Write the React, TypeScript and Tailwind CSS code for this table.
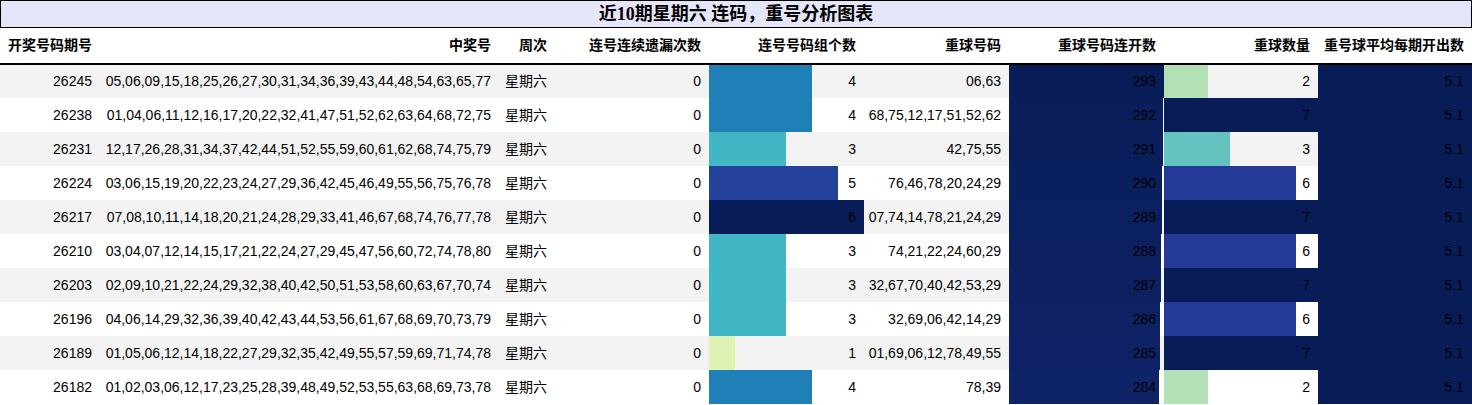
import React from "react";

type Row = {
  issue: string;
  nums: string;
  week: string;
  miss: number;
  groups: number;
  repeat: string;
  streak: number;
  repeatCount: number;
  avg: string;
};

const rows: Row[] = [
  { issue: "26245", nums: "05,06,09,15,18,25,26,27,30,31,34,36,39,43,44,48,54,63,65,77", week: "星期六", miss: 0, groups: 4, repeat: "06,63", streak: 293, repeatCount: 2, avg: "5.1" },
  { issue: "26238", nums: "01,04,06,11,12,16,17,20,22,32,41,47,51,52,62,63,64,68,72,75", week: "星期六", miss: 0, groups: 4, repeat: "68,75,12,17,51,52,62", streak: 292, repeatCount: 7, avg: "5.1" },
  { issue: "26231", nums: "12,17,26,28,31,34,37,42,44,51,52,55,59,60,61,62,68,74,75,79", week: "星期六", miss: 0, groups: 3, repeat: "42,75,55", streak: 291, repeatCount: 3, avg: "5.1" },
  { issue: "26224", nums: "03,06,15,19,20,22,23,24,27,29,36,42,45,46,49,55,56,75,76,78", week: "星期六", miss: 0, groups: 5, repeat: "76,46,78,20,24,29", streak: 290, repeatCount: 6, avg: "5.1" },
  { issue: "26217", nums: "07,08,10,11,14,18,20,21,24,28,29,33,41,46,67,68,74,76,77,78", week: "星期六", miss: 0, groups: 6, repeat: "07,74,14,78,21,24,29", streak: 289, repeatCount: 7, avg: "5.1" },
  { issue: "26210", nums: "03,04,07,12,14,15,17,21,22,24,27,29,45,47,56,60,72,74,78,80", week: "星期六", miss: 0, groups: 3, repeat: "74,21,22,24,60,29", streak: 288, repeatCount: 6, avg: "5.1" },
  { issue: "26203", nums: "02,09,10,21,22,24,29,32,38,40,42,50,51,53,58,60,63,67,70,74", week: "星期六", miss: 0, groups: 3, repeat: "32,67,70,40,42,53,29", streak: 287, repeatCount: 7, avg: "5.1" },
  { issue: "26196", nums: "04,06,14,29,32,36,39,40,42,43,44,53,56,61,67,68,69,70,73,79", week: "星期六", miss: 0, groups: 3, repeat: "32,69,06,42,14,29", streak: 286, repeatCount: 6, avg: "5.1" },
  { issue: "26189", nums: "01,05,06,12,14,18,22,27,29,32,35,42,49,55,57,59,69,71,74,78", week: "星期六", miss: 0, groups: 1, repeat: "01,69,06,12,78,49,55", streak: 285, repeatCount: 7, avg: "5.1" },
  { issue: "26182", nums: "01,02,03,06,12,17,23,25,28,39,48,49,52,53,55,63,68,69,73,78", week: "星期六", miss: 0, groups: 4, repeat: "78,39", streak: 284, repeatCount: 2, avg: "5.1" },
];

// YlGnBu stops
const stops = [
  [255, 255, 217],
  [237, 248, 177],
  [199, 233, 180],
  [127, 205, 187],
  [65, 182, 196],
  [29, 145, 192],
  [34, 94, 168],
  [37, 52, 148],
  [8, 29, 88],
];

function ylgnbu(t: number) {
  const x = Math.max(0, Math.min(1, t)) * (stops.length - 1);
  const i = Math.min(Math.floor(x), stops.length - 2);
  const f = x - i;
  const c = stops[i].map((a, k) => Math.round(a + (stops[i + 1][k] - a) * f));
  return `rgb(${c[0]},${c[1]},${c[2]})`;
}

function bar(v: number, max: number) {
  const pct = (v / max) * 100;
  const col = ylgnbu(v / max);
  return { background: `linear-gradient(90deg, ${col} ${pct}%, transparent ${pct}%)` };
}

const maxGroups = Math.max(...rows.map((r) => r.groups));
const maxStreak = Math.max(...rows.map((r) => r.streak));
const maxRepeat = Math.max(...rows.map((r) => r.repeatCount));

const headers = [
  "重球号码连开数",
];

export default function App() {
  return (
    <div className="w-[1472px] bg-white text-black font-['Liberation_Sans','Noto_Sans_CJK_SC',sans-serif] text-[14px]">
      <div className="h-[28px] border border-black bg-[#e6e6fa] text-center font-bold text-[18px] leading-[26px] font-['Liberation_Serif','Noto_Sans_CJK_SC',serif]">
        近10期星期六 连码，重号分析图表
      </div>
      <table className="table-fixed w-[1472px] border-collapse">
        <colgroup>
          <col className="w-[100px]" />
          <col className="w-[399px]" />
          <col className="w-[56px]" />
          <col className="w-[154px]" />
          <col className="w-[155px]" />
          <col className="w-[145px]" />
          <col className="w-[155px]" />
          <col className="w-[154px]" />
          <col className="w-[154px]" />
        </colgroup>
        <thead>
          <tr className="h-[36px] border-b-2 border-black font-bold">
            <th className="pl-2 text-left font-bold">开奖号码期号</th>
            <th className="pr-2 text-right font-bold">中奖号</th>
            <th className="pr-2 text-right font-bold">周次</th>
            <th className="pr-2 text-right font-bold">连号连续遗漏次数</th>
            <th className="pr-2 text-right font-bold">连号号码组个数</th>
            <th className="pr-2 text-right font-bold">重球号码</th>
            <th className="pr-2 text-right font-bold">{headers[0]}</th>
            <th className="pr-2 text-right font-bold">重球数量</th>
            <th className="pr-2 text-right font-bold whitespace-nowrap">重号球平均每期开出数</th>
          </tr>
        </thead>
        <tbody>
          {rows.map((r, i) => (
            <tr key={r.issue} className={`h-[34px] ${i % 2 === 0 ? "bg-[#f3f3f3]" : "bg-white"}`}>
              <td className="pr-2 text-right">{r.issue}</td>
              <td className="pr-2 text-right whitespace-nowrap">{r.nums}</td>
              <td className="pr-2 text-right whitespace-nowrap">{r.week}</td>
              <td className="pr-2 text-right">{r.miss}</td>
              <td className="pr-2 text-right" style={bar(r.groups, maxGroups)}>{r.groups}</td>
              <td className="pr-2 text-right whitespace-nowrap">{r.repeat}</td>
              <td className="pr-2 text-right" style={bar(r.streak, maxStreak)}>{r.streak}</td>
              <td className="pr-2 text-right" style={bar(r.repeatCount, maxRepeat)}>{r.repeatCount}</td>
              <td className="pr-2 text-right bg-[#081d58]">{r.avg}</td>
            </tr>
          ))}
        </tbody>
      </table>
    </div>
  );
}
